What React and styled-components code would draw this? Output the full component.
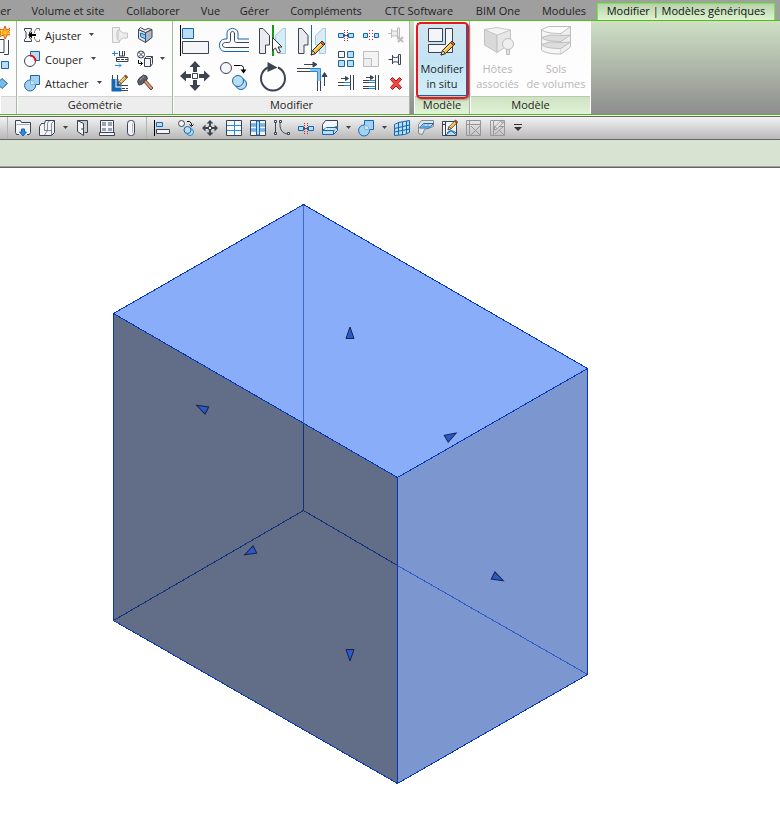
import React from 'react';
import styled, { createGlobalStyle } from 'styled-components';

const GlobalStyle = createGlobalStyle`
  * {
    box-sizing: border-box;
  }
  body {
    margin: 0;
    background: #fff;
    font-family: 'Open Sans', 'Noto Sans', sans-serif;
    font-size: 11px;
    color: #1f1f1f;
  }
  button {
    font: inherit;
    color: inherit;
    padding: 0;
    border: 0;
    background: none;
  }
  svg {
    flex: none;
  }
`;

const Page = styled.div`
  display: flex;
  flex-direction: column;
  min-height: 100vh;
  overflow-x: hidden;
`;

/* ---------- tabs ---------- */

const TabBar = styled.nav`
  display: flex;
  align-items: flex-end;
  height: 21px;
  background: #9f9f9f;
  border-bottom: 1px solid #4fbf17;
`;

const Tab = styled.button`
  flex: none;
  width: ${(p) => p.$width}px;
  height: 18px;
  line-height: 16px;
  white-space: nowrap;
  text-align: center;
`;

const CutTab = styled(Tab)`
  display: flex;
  justify-content: flex-end;
  align-items: center;
  padding-right: 10px;
`;

const ActiveTab = styled(Tab)`
  border: 1px solid #66f52b;
  border-bottom: 0;
  height: 17px;
  line-height: 14px;
  padding-bottom: 2px;
  color: #111;
  background: linear-gradient(#b9d2ad, #dcf5cf);
`;

/* ---------- ribbon ---------- */

const Ribbon = styled.div`
  display: flex;
  height: 94px;
  background: linear-gradient(#cfe0c5, #8d8d8d);
  border-bottom: 1px solid #4fbf17;
`;

const Panel = styled.section`
  display: flex;
  flex-direction: column;
  flex: none;
  width: ${(p) => p.$width}px;
  background: linear-gradient(#fbfbfb, #fff);
  border-right: ${(p) => (p.$last ? '1px solid #fff' : '1px solid #a9b5a4')};
  margin-left: ${(p) => p.$gap || 0}px;
`;

const PanelBody = styled.div`
  display: flex;
  height: 75px;
  padding: ${(p) => p.$pad || '2px 0 0'};
`;

const PanelTitle = styled.h2`
  margin: 0 0 0 1px;
  height: 18px;
  line-height: 16px;
  font-size: 11px;
  font-weight: 400;
  text-align: center;
  border-top: 1px solid ${(p) => (p.$green ? '#b9c9b0' : '#d3d3d3')};
  background: ${(p) => (p.$green ? 'linear-gradient(#cfe2c4, #dff4d4)' : '#ededed')};
`;

const Column = styled.div`
  display: flex;
  flex-direction: column;
  align-items: flex-start;
  flex: none;
  width: ${(p) => p.$width}px;
`;

const SmallTool = styled.button`
  display: flex;
  align-items: center;
  height: 24px;
  white-space: nowrap;
`;

const LargeIconTool = styled.button`
  display: flex;
  align-items: flex-start;
  height: 35px;
  padding-top: 2px;
`;

const SmallLabel = styled.span`
  margin: 0 7px 0 3px;
`;

const BigGrid = styled.div`
  display: grid;
  grid-template-columns: repeat(4, 39px);
  grid-template-rows: 35px 35px;
  padding-left: 5px;
`;

const SmallGrid = styled.div`
  display: grid;
  grid-template-columns: repeat(3, 25px);
  grid-template-rows: repeat(3, 24px);
  padding-left: 1px;
`;

const BigTool = styled.button`
  position: relative;
  display: flex;
  flex-direction: column;
  align-items: center;
  justify-content: flex-start;
  flex: none;
  gap: 4px;
  width: ${(p) => p.$width}px;
  height: 73px;
  padding-top: 2px;
  line-height: 15px;
  text-align: center;
  white-space: nowrap;
  color: ${(p) => (p.disabled ? '#b7b7b7' : '#1f1f1f')};
`;

const PressedTool = styled(BigTool)`
  border: 1px solid #1c5fa8;
  background: linear-gradient(#d3e6f0, #c3e3f3 50%, #d3eefa);
  padding-top: 1px;

  &::after {
    content: '';
    position: absolute;
    inset: -2px -3px -4px -2px;
    border: 2px solid #e8161d;
    border-radius: 5px;
    box-shadow: 1px 1px 2px rgba(0, 0, 0, 0.35);
  }
`;

/* ---------- quick access toolbar ---------- */

const QuickBar = styled.div`
  display: flex;
  align-items: center;
  height: 24px;
  margin-top: 1px;
  padding-left: 4px;
  background: linear-gradient(#f2f2f2, #b9b9b9);
  border-top: 1px solid #666;
  border-bottom: 1px solid #666;
`;

const QuickButton = styled.button`
  display: flex;
  align-items: center;
  justify-content: center;
  flex: none;
  width: ${(p) => p.$width || 24}px;
  height: 20px;
`;

const Divider = styled.span`
  flex: none;
  width: 1px;
  height: 22px;
  margin: 0 3px;
  background: #b3b3b3;
`;

const OptionsBar = styled.div`
  height: 28px;
  background: #d8e3d1;
  border-bottom: 1px solid #646464;
  box-shadow: inset 0 -1px #a2a2a2;
`;

const Canvas = styled.main`
  flex: 1;
  padding: 35px 0 0 112px;
  background: #fff;
  svg {
    display: block;
  }
`;

/* ---------- icons ---------- */

const D = '#3c4351';
const B = '#1467b0';
const L = '#b9ddf3';
const W = '#f4f5f8';
const G = '#bdbdbd';

const Svg = ({ size = 20, children }) => (
  <svg width={size} height={size} viewBox={`0 0 ${size} ${size}`} fill="none" stroke={D} aria-hidden="true">
    {children}
  </svg>
);

const Caret = () => (
  <svg width="7" height="4" viewBox="0 0 7 4" aria-hidden="true">
    <path d="M1 0h5L3.500 3z" fill="#444" />
  </svg>
);

// tip sits at 0,14 and the rubber at 14,0
const Pencil = ({ x, y, scale = 1, grey }) => (
  <g transform={`translate(${x} ${y}) scale(${scale})`} stroke={grey ? '#888' : '#33302c'} strokeWidth="1">
    <path d="M0 14l1.500-4.500L9.500 1.500l3 3L4.500 12.500z" fill={grey ? '#ddd' : '#f7b733'} />
    <path d="M9.500 1.500L11 0l3 3-1.500 1.500z" fill={grey ? '#ccc' : '#e4572e'} />
    <path d="M2.500 10.500l7.500-7.500" stroke={grey ? '#eee' : '#fff1b8'} />
    <path d="M0 14l1.500-4.500 3 3z" fill={grey ? '#eee' : '#fbe6c4'} />
  </g>
);

const icons = {
  adjust: (
    <Svg>
      <path d="M2.500 3.500h7v2l-2 1.500v6l2 1.500v2h-7v-2l1.500-1.500V7L2.500 5.500z" fill={W} />
      <path d="M17.500 3.500h-3l-2 3v1.500M17.500 16.500h-3l-2-3V12M17.500 3.500v2M17.500 14.500v2" stroke="#777" />
      <path d="M14 10H8" stroke="#000" strokeWidth="2" />
      <path d="M6 10l4-3.500v7z" fill="#000" stroke="none" />
    </Svg>
  ),
  cut: (
    <Svg>
      <path d="M8.500 2.500h9v9h-9z" fill={L} stroke={B} />
      <circle cx="8" cy="12" r="5.500" fill="#fff" />
      <path d="M8 6.500a5.500 5.500 0 0 1 5.500 5.500" stroke="#f20d0d" strokeWidth="2" />
    </Svg>
  ),
  join: (
    <Svg>
      <path d="M8.500 7V2.500h9v9h-4A5.500 5.500 0 1 1 8.500 7z" fill="#a5d1ee" stroke={B} />
      <path d="M8.500 7v4.500h5A5.500 5.500 0 0 0 8.500 7z" fill="#c8e5f6" stroke="#7ab6df" />
    </Svg>
  ),
  cope: (
    <Svg>
      <path d="M2.500 2.500h7v2.500h-1.500l-1 2v6l1 2H9.500v2.500h-7z" fill="#f0f0f0" stroke="#c4c4c4" />
      <path d="M9.500 5l3.500 3h4.500v5H13l-3.500 3-1.500-1.500v-8z" fill="#ececec" stroke="#c4c4c4" />
    </Svg>
  ),
  paint: (
    <Svg>
      <path d="M3.500 4.500l7 3v10l-7-4z" fill="#dfe5ee" />
      <path d="M10.500 7.500l6.500-3v8l-6.500 5z" fill="#aeb6c4" />
      <path d="M3.500 4.500l2-2 4.500 2.500 3-1.500 4 1-6.500 3z" fill={W} />
      <path d="M5.500 8l5 2v4l-5-2.500z" fill="#8fc8ee" stroke={B} />
    </Svg>
  ),
  beam: (
    <Svg>
      <path d="M2 4.500h6M4.500 2v5" stroke="#2a8ae0" />
      <path d="M9.500 2v5h5V2M12.500 2v5" />
      <path d="M6.500 8.500H18v4H6.500z" fill="#fff" />
      <path d="M7 10.500h11" strokeDasharray="3 1" />
      <path d="M5 16.500h6M9 14.500l2 2-2 2" stroke="#2a8ae0" />
    </Svg>
  ),
  demolish: (
    <Svg>
      <circle cx="6" cy="5.500" r="3.500" fill="#fff" />
      <path d="M3.500 3l5 5M8.500 3l-5 5" />
      <path d="M3.500 11v3.500H7M5.500 12.500l2 2-2 2" stroke="#000" />
      <path d="M9.500 9.500l2-2h6v7l-2 3h-6z" fill={W} />
      <path d="M9.500 9.500h6v8M15.500 9.500l2-2" />
    </Svg>
  ),
  wallJoin: (
    <Svg>
      <path d="M2.500 2v15.500H18M7.500 2v10.500H18" />
      <path d="M2.500 6v11.500h9M4.500 6v9.500h7M7.500 6v6.500h4" stroke={B} strokeWidth="2" />
      <path d="M12 15.500h6" strokeDasharray="3 1" />
      <Pencil x={8} y={2} scale={0.7} />
    </Svg>
  ),
  hammer: (
    <Svg>
      <path d="M8 8l8 9 2-2-8-9z" fill="#d99a78" stroke="#6b3b2a" />
      <path d="M2.500 8.500l1.500-3 4.500-3.500 3 1 1 3-3 2-2 3-3.500 1z" fill="#5c606b" stroke="#3a3d45" />
      <path d="M5 7l4-3.500" stroke="#9ba0aa" />
    </Svg>
  ),
  align: (
    <Svg size={32}>
      <path d="M1.500 0v31" stroke="#000" />
      <path d="M3.500 3.500h11v10h-11z" fill={L} stroke={B} />
      <path d="M3.500 16.500h26v12h-26z" fill={W} />
    </Svg>
  ),
  offset: (
    <Svg size={32}>
      <path
        d="M31 26.500H7C-.5 26.500-.5 14 7 14h2V8c0-6 11-6 11 0v6h11"
        stroke={B}
      />
      <path
        d="M31 22.500H7.500c-4 0-4-5 0-5h3c1.500 0 2-1 2-2V9c0-3.500 4-3.500 4 0v6.500c0 1 .5 2 2 2H31"
      />
    </Svg>
  ),
  mirrorPick: (
    <Svg size={32}>
      <path d="M2.500 3.500H6l6.500 7v9.500h-4v8.500h-6z" fill="#e9ebf1" />
      <path d="M28.500 3.500H26l-7.500 7v9.500h4v8.500h6z" fill="#d8ecf7" stroke="#9ec8e2" />
      <path d="M16 0v31" stroke="#179a17" strokeWidth="2" />
      <path d="M15.500 12.500v13l3-2.500 2.500 5 2.500-1-2.500-5h4z" fill="#fff" stroke="#333" />
    </Svg>
  ),
  mirrorDraw: (
    <Svg size={32}>
      <path d="M2.500 3.500H6l6 7v9.500H8v8.500H2.500z" fill="#e9ebf1" />
      <path d="M29.500 3.500H27l-7.500 7v9.500h4v8.500h6z" fill="#d8ecf7" stroke="#9ec8e2" />
      <path d="M15.500 0v28" stroke={B} />
      <Pencil x={15} y={16} />
    </Svg>
  ),
  move: (
    <Svg size={32}>
      <path
        d="M16 1l5.500 6H18v5h-4V7h-3.500zM16 31l5.500-6H18v-5h-4v5h-3.500zM1 16l6-5.500V14h5v4H7v3.500zM31 16l-6-5.500V14h-5v4h5v3.500z"
        fill={D}
        stroke="none"
      />
      <path d="M13.500 13.500h5v5h-5z" fill="#fff" />
    </Svg>
  ),
  copy: (
    <Svg size={32}>
      <circle cx="8" cy="8" r="5.500" fill={W} />
      <path d="M16 5.500h6.500c2 0 3 1 3 3V11" stroke="#000" />
      <path d="M22.500 9.500h6l-3 4z" fill="#000" stroke="none" />
      <circle cx="23" cy="24" r="5.500" fill={L} stroke={B} />
      <circle cx="20" cy="21" r="5.500" fill={L} stroke={B} />
    </Svg>
  ),
  rotate: (
    <Svg size={32}>
      <path d="M11 7.500a12 12 0 1 0 10 0" strokeWidth="2" />
      <path d="M10.500 2l10 5.500-10 4.500z" fill={D} stroke="none" />
    </Svg>
  ),
  trimCorner: (
    <Svg size={32}>
      <path d="M8 4.500h12M17 2l4 2.500L17 7z" fill={D} />
      <path d="M1 8.500h13M1 11.500h13M21.500 21v10M24.500 21v10" />
      <path d="M14 10h9v11" stroke="#8fc4ea" strokeWidth="3" />
      <path d="M14 8.500h10.500V21M14 11.500h7.500V21" stroke="#2a86d6" />
      <path d="M28.500 26V13M26 16.500l2.500-4 2.500 4z" fill={D} />
    </Svg>
  ),
  split: (
    <Svg>
      <path d="M2.500 8.500h5v4h-5zM12.500 8.500h5v4h-5z" fill={L} stroke={B} />
      <path d="M8.500 5v12M11.500 5v12" stroke="#c8231c" strokeDasharray="1 1" />
      <path d="M8 10.500h4" stroke={B} />
    </Svg>
  ),
  splitGap: (
    <Svg>
      <path d="M2.500 8.500h4v4h-4zM13.500 8.500h4v4h-4z" fill={L} stroke={B} />
      <path d="M8.500 5v12M11.500 5v12" stroke="#c8231c" strokeDasharray="1 2" />
    </Svg>
  ),
  unpin: (
    <Svg>
      <path d="M2 8.500h3.500M5.500 4v9M5.500 5.500c2 1 4 1 6 0v6c-2-1-4-1-6 0M11.500 3v11h2V3z" stroke={G} fill="#eee" />
      <path d="M12 12l5 5M17 12l-5 5" stroke={G} strokeWidth="2" />
    </Svg>
  ),
  array: (
    <Svg>
      <path d="M2.500 2.500h6v6h-6z" fill={W} />
      <path d="M11.500 2.500h6v6h-6zM2.500 11.500h6v6h-6zM11.500 11.500h6v6h-6z" fill={L} stroke={B} />
    </Svg>
  ),
  scale: (
    <Svg>
      <path d="M2.500 2.500h15v15h-15z" fill="#f3f3f3" stroke={G} />
      <path d="M2.500 9.500h8v8h-8z" fill="#eee" stroke={G} />
    </Svg>
  ),
  pin: (
    <Svg>
      <path d="M2.500 10.500h4M6.500 6v9M6.500 7.500c2 1.500 4 1.500 6 0v6c-2-1-4-1-6 0" fill={W} />
      <path d="M12.500 5.500h2v10h-2z" fill={W} />
    </Svg>
  ),
  trimSingle: (
    <Svg>
      <path d="M5 5.500h5M9.500 3.500l3 2-3 2z" fill={D} />
      <path d="M2 9.500h6M2 12.500h6M14.500 2v15M17.500 2v15" />
      <path d="M8 9.500h6M8 12.500h6" stroke="#2a86d6" />
    </Svg>
  ),
  trimMulti: (
    <Svg>
      <path d="M5 4.500h5M9.500 2.500l3 2-3 2z" fill={D} />
      <path d="M2 7.500h6M2 9.500h6M2 13.500h6M2 15.500h6M14.500 2v15M17.500 2v15" />
      <path d="M8 7.500h6M8 9.500h6M8 13.500h6M8 15.500h6" stroke="#2a86d6" />
    </Svg>
  ),
  remove: (
    <Svg>
      <path
        d="M6.500 4.500l3.500 3.500 3.500-3.500 2 2-3.500 4 3.500 4-2 2-3.500-3.500-3.500 3.500-2-2 3.500-4-3.500-4z"
        fill="#f04a42"
        stroke="#b3120f"
      />
    </Svg>
  ),
  editInPlace: (
    <Svg size={32}>
      <path d="M2.500 3.500h14v13h-14z" fill={W} />
      <path d="M19.500 3.500h7v24h-24v-8h17z" fill={W} />
      <Pencil x={15} y={16} />
    </Svg>
  ),
  hosts: (
    <Svg size={32}>
      <path d="M2.500 4.500L15 10v17.500L2.500 20z" fill="#d9d9d9" stroke="#c2c2c2" />
      <path d="M15 10l13.500-5v14L15 27.500z" fill="#e6e6e6" stroke="#c2c2c2" />
      <path d="M2.500 4.500L15 2.500l13.500 2.500L15 10z" fill="#f4f4f4" stroke="#c9c9c9" />
      <circle cx="26" cy="19" r="5.500" fill="#efefef" stroke={G} />
      <path d="M24.500 24.500h3v5h-3z" fill="#e2e2e2" stroke={G} />
    </Svg>
  ),
  massFloors: (
    <Svg size={32}>
      <path d="M1.500 4.500c3 3 10 4 19.500 4v20.500c-9 0-16-1-19.500-4z" fill="#f5f5f5" stroke={G} />
      <path d="M21 8.500l9.500-7V22L21 29" fill="#eee" stroke={G} />
      <path d="M1.500 4.500l7-3h22" stroke={G} />
      <path d="M1.500 12.500c3 3 10 4 19.500 4l9.500-6.500c-8 1-15 0-20 0z" stroke={G} fill="#ddd" />
      <path d="M1.500 19.500c3 3 10 4 19.500 4l9.500-6.500c-8 1-15 0-20 0z" stroke={G} fill="#ddd" />
    </Svg>
  ),
  load: (
    <Svg>
      <path d="M6 16.500H3.500l-1-2v-12h5l1 2h9v10l-1 2H14" fill={W} />
      <path d="M3.500 6.500h13" stroke="#aab" />
      <path d="M8.500 11h3v3h2L10 18l-3.500-4h2z" fill="#2a8ae0" stroke={B} />
    </Svg>
  ),
  massBox: (
    <Svg>
      <path d="M2.500 8.500l2-3h3l1-3h9v12l-3 3h-12z" fill={W} />
      <path d="M7.500 5.500v7h7M10.500 5v7.500l-3 4.500M14.500 5.500v12M10.500 5l2-2.500M14.500 5.500l3-3" strokeOpacity=".6" />
    </Svg>
  ),
  door: (
    <Svg>
      <path d="M4.500 2.500h10v12h-3" fill="#c5cad3" />
      <path d="M4.500 2.500l6 3v12l-6-4z" fill={W} />
      <path d="M9 10v2" />
    </Svg>
  ),
  window: (
    <Svg>
      <path d="M3.500 2.500h13v12h-13zM2.500 14.500h15v3h-15z" fill={W} />
      <path d="M5 4h4v4H5zM11 4h4v4h-4zM5 10h4v3H5zM11 10h4v3h-4z" fill="#9aa2b0" stroke="none" />
    </Svg>
  ),
  column: (
    <Svg>
      <rect x="6.500" y="2.500" width="7" height="15" rx="3" fill={W} />
      <path d="M11.500 5v10" stroke="#b3b8c2" />
    </Svg>
  ),
  alignSmall: (
    <Svg>
      <path d="M2.500 2v16" stroke="#000" />
      <path d="M4.500 4.500h6v4h-6z" fill={L} stroke={B} />
      <path d="M4.500 11.500h13v4h-13z" fill={W} />
    </Svg>
  ),
  copySmall: (
    <Svg>
      <circle cx="5.500" cy="5.500" r="3" fill={W} />
      <path d="M11 3.500h2.500l2 2v2M13.500 6.500l2 2 2-2" stroke="#000" />
      <circle cx="14" cy="14" r="3.500" fill={L} stroke="#2a86d6" />
      <circle cx="11.500" cy="12" r="3.500" fill={L} stroke={B} />
    </Svg>
  ),
  moveSmall: (
    <Svg>
      <path
        d="M10 2l3.500 3.500H11V8H9V5.500H6.500zM10 18l3.500-3.500H11V12H9v2.500H6.500zM2 10l3.500-3.500V9H8v2H5.500v2.500zM18 10l-3.500-3.500V9H12v2h2.500v2.500z"
        fill={D}
        stroke="none"
      />
      <path d="M8.500 8.500h3v3h-3z" fill="#fff" />
    </Svg>
  ),
  grid: (
    <Svg>
      <path d="M2.500 2.500h15v15h-15z" fill={W} />
      <path d="M10.500 3v14M3 7.500h14M3 12.500h14" stroke="#2a8ae0" />
    </Svg>
  ),
  mullion: (
    <Svg>
      <path d="M2.500 2.500h15v15h-15z" fill={W} />
      <path d="M3 7h14M3 12h14" stroke="#2a8ae0" strokeWidth="3" />
      <path d="M8.500 3h3v14h-3z" fill={L} stroke={B} />
      <path d="M3 7h5M12 7h5M3 12h5M12 12h5" stroke={L} />
    </Svg>
  ),
  spline: (
    <Svg>
      <path d="M3.500 4v12M8 3.500v3c0 6 3 9 8 9.500" />
      <path d="M2.500 2.500h2v2h-2zM2.500 14.500h2v2h-2zM7.500 2.500h2v2h-2zM15.500 14.500h2v2h-2z" fill="#fff" />
    </Svg>
  ),
  floor: (
    <Svg>
      <path d="M2.500 12.500v-6l3-4h12v6z" fill={W} />
      <path d="M2.500 12.500l4-3h11l-4 3zM2.500 12.500v4h11v-4M13.500 16.500l4-4v-3" fill={L} stroke={B} />
      <path d="M5 11h11" stroke="#fff" strokeDasharray="2 1" />
    </Svg>
  ),
  curtain: (
    <Svg>
      <path d="M2.500 6.500l4-2 11-2v12l-5 2-10 1z" fill={L} stroke={B} />
      <path d="M6.500 4.500v12.500M10.500 4v13M14.500 3v12.500M2.500 10.500l15-3.500M2.500 14l15-3" stroke={B} />
    </Svg>
  ),
  plane: (
    <Svg>
      <path d="M2.500 15.500v-9l3-4h12v6l-9 3-2 5z" fill="#e3e3e3" stroke="#8a8a8a" />
      <path d="M3.500 10l4-4.500h10l-4 4.500z" fill={L} stroke={B} />
      <path d="M6 8.500h9M8 6v4M12 6v4" stroke="#4d9fdc" />
    </Svg>
  ),
  editView: (
    <Svg>
      <path d="M2.500 3.500h14v14h-14zM2.500 6.500h3v-3M5.500 3.500v14" fill={W} />
      <path d="M6 17l5-4.500 5.500 4.500M7 15c3-3 6-3 9 0" fill={L} stroke={B} />
      <Pencil x={8} y={2} scale={0.7} />
    </Svg>
  ),
  closeView: (
    <Svg>
      <path d="M2.500 2.500h14v15h-14zM5.500 3v14M3 6.500h14M7 8l9 9M16 8l-9 9" stroke="#959595" />
    </Svg>
  ),
  editOff: (
    <Svg>
      <path d="M2.500 2.500h14v15h-14zM5.500 3v14M6 8.500h11M7 16l8-7M11 12l5 5" stroke="#9a9a9a" />
      <Pencil x={6} y={2} scale={0.7} grey />
    </Svg>
  ),
};

const FamilyIcons = () => (
  <svg width="10" height="70" viewBox="0 0 10 70" fill="none" aria-hidden="true">
    <path d="M-2 14.500h6v13h-6M8.500 15v14.500H4" stroke={D} />
    <path d="M5 1l1.500 4L11 3 8.500 7l2.500 2.500-4 .5-2 4-1.500-4L-1 12l2-4L-1 4l4.500 1z" fill="#ffe52e" stroke="#e2501a" />
    <circle cx="5" cy="7.500" r="2.500" fill="#ffc928" stroke="#f58a1a" />
    <path d="M1.500 36.500h7v7h-7z" fill={L} stroke={B} />
    <path d="M2 53.500l5.500 5-5.500 5-5-5z" fill="#7dbbe6" stroke={B} />
  </svg>
);

/* ---------- data ---------- */

const tabs = [
  { name: 'Volume et site', width: 94 },
  { name: 'Collaborer', width: 76 },
  { name: 'Vue', width: 39 },
  { name: 'Gérer', width: 49 },
  { name: 'Compléments', width: 94 },
  { name: 'CTC Software', width: 92 },
  { name: 'BIM One', width: 66 },
  { name: 'Modules', width: 66 },
];

const modifyBig = ['align', 'offset', 'mirrorPick', 'mirrorDraw', 'move', 'copy', 'rotate', 'trimCorner'];
const modifySmall = ['split', 'splitGap', 'unpin', 'array', 'scale', 'pin', 'trimSingle', 'trimMulti', 'remove'];

const quickTools = [
  '|', 'load', 'massBox', 'v', 'door', 'window', 'column', '|',
  'alignSmall', 'copySmall', 'moveSmall', 'grid', 'mullion', 'spline', 'split',
  'floor', 'v', 'join', 'v', 'curtain', 'plane', 'editView', 'closeView', 'editOff',
];

const QuickTool = ({ name }) => {
  if (name === '|') return <Divider />;
  if (name === 'v') {
    return (
      <QuickButton $width={12} aria-label="options">
        <Caret />
      </QuickButton>
    );
  }
  return <QuickButton aria-label={name}>{icons[name]}</QuickButton>;
};

const TextTool = ({ icon, label }) => (
  <SmallTool>
    {icons[icon]}
    <SmallLabel>{label}</SmallLabel>
    <Caret />
  </SmallTool>
);

/* ---------- 3D view ---------- */

const arrows = [
  [350, 333, 0],
  [202, 408, -63],
  [451, 436, 60],
  [250, 552, -117],
  [498, 578, 117],
  [350, 655, 180],
];

const Box3D = () => (
  <svg width="477" height="583" viewBox="112 203 477 583" role="img" aria-label="3D">
    <g shapeRendering="crispEdges">
      <path d="M303.500 204.500L587.500 368.500 397.500 477.500 113.500 313.500z" fill="#8aadf9" />
      <path d="M113.500 313.500l284 164v306l-284-163z" fill="#626e87" />
      <path d="M587.500 368.500l-190 109v306l190-109z" fill="#7c97cf" />
      <g fill="none" strokeWidth="1">
        <path d="M303.500 204.500v218" stroke="#3f6bd0" />
        <path d="M303.500 422.500v88L113.500 620.500M303.500 510.500l94 55" stroke="#12307c" />
        <path d="M397.500 565.500l190 109" stroke="#2f5bc4" />
        <path
          d="M303.500 204.500L587.500 368.500 397.500 477.500 113.500 313.500zM113.500 313.500v307l284 163v-306M397.500 783.500l190-109v-306"
          stroke="#0537b8"
        />
      </g>
    </g>
    {arrows.map(([x, y, angle]) => (
      <path
        key={`${x}-${y}`}
        d="M0-6l4 11.500h-8z"
        transform={`translate(${x} ${y}) rotate(${angle})`}
        fill="#2c5ac8"
        stroke="#14244f"
      />
    ))}
  </svg>
);

const App = () => (
  <Page>
    <GlobalStyle />
    <TabBar>
      <CutTab $width={21}>ser</CutTab>
      {tabs.map((t) => (
        <Tab key={t.name} $width={t.width}>{t.name}</Tab>
      ))}
      <ActiveTab $width={178}>Modifier | Modèles génériques</ActiveTab>
    </TabBar>

    <Ribbon>
      <Panel $width={17}>
        <PanelBody $pad="4px 0 0"><FamilyIcons /></PanelBody>
        <PanelTitle />
      </Panel>
      <Panel $width={156}>
        <PanelBody $pad="2px 0 0 5px">
          <Column $width={88}>
            <TextTool icon="adjust" label="Ajuster" />
            <TextTool icon="cut" label="Couper" />
            <TextTool icon="join" label="Attacher" />
          </Column>
          <Column $width={25}>
            {['cope', 'beam', 'wallJoin'].map((n) => (
              <SmallTool key={n} aria-label={n}>{icons[n]}</SmallTool>
            ))}
          </Column>
          <Column $width={24}>
            {['paint', 'demolish', 'hammer'].map((n) => (
              <SmallTool key={n} aria-label={n}>{icons[n]}</SmallTool>
            ))}
          </Column>
          <Column $width={8}>
            <SmallTool as="span" />
            <SmallTool aria-label="options"><Caret /></SmallTool>
          </Column>
        </PanelBody>
        <PanelTitle>Géométrie</PanelTitle>
      </Panel>
      <Panel $width={237}>
        <PanelBody $pad="2px 0 0 1px">
          <BigGrid>
            {modifyBig.map((n) => (
              <LargeIconTool key={n} aria-label={n}>{icons[n]}</LargeIconTool>
            ))}
          </BigGrid>
          <SmallGrid>
            {modifySmall.map((n) => (
              <SmallTool key={n} aria-label={n}>{icons[n]}</SmallTool>
            ))}
          </SmallGrid>
        </PanelBody>
        <PanelTitle>Modifier</PanelTitle>
      </Panel>
      <Panel $width={56} $gap={4}>
        <PanelBody $pad="2px 0 0 3px">
          <PressedTool $width={50}>
            {icons.editInPlace}
            <span>Modifier<br />in situ</span>
          </PressedTool>
        </PanelBody>
        <PanelTitle $green>Modèle</PanelTitle>
      </Panel>
      <Panel $width={121} $last>
        <PanelBody>
          <BigTool $width={55} disabled>
            {icons.hosts}
            <span>Hôtes<br />associés</span>
          </BigTool>
          <BigTool $width={62} disabled>
            {icons.massFloors}
            <span>Sols<br />de volumes</span>
          </BigTool>
        </PanelBody>
        <PanelTitle $green>Modèle</PanelTitle>
      </Panel>
    </Ribbon>

    <QuickBar>
      {quickTools.map((name, i) => (
        <QuickTool key={i} name={name} />
      ))}
      <QuickButton $width={16} aria-label="customize">
        <svg width="10" height="8" viewBox="0 0 10 8" aria-hidden="true">
          <path d="M1 0h8v1H1zM1 3h8L5 7z" fill="#333" />
        </svg>
      </QuickButton>
    </QuickBar>
    <OptionsBar />
    <Canvas>
      <Box3D />
    </Canvas>
  </Page>
);

export default App;
